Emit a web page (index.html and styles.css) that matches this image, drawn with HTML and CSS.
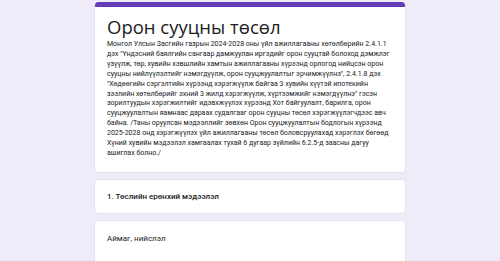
FILE: index.html
```html
<!DOCTYPE html>
<html lang="mn">
<head>
<meta charset="utf-8">
<link rel="stylesheet" href="styles.css">
</head>
<body>
<main class="form">
  <section class="card card-head">
    <div class="top-bar"></div>
    <div class="head-body">
      <h1 class="title">Орон сууцны төсөл</h1>
      <p class="desc">Монгол Улсын Засгийн газрын 2024-2028 оны үйл ажиллагааны хөтөлбөрийн 2.4.1.1 дэх "Үндэсний баялгийн сангаар дамжуулан иргэдийг орон сууцтай болоход дэмжлэг үзүүлж, төр, хувийн хэвшлийн хамтын ажиллагааны хүрээнд орлогод нийцсэн орон сууцны нийлүүлэлтийг нэмэгдүүлж, орон сууцжуулалтыг эрчимжүүлнэ", 2.4.1.8 дэх "Хөдөөгийн сэргэлтийн хүрээнд хэрэгжүүлж байгаа 3 хувийн хүүтэй ипотекийн зээлийн хөтөлбөрийг эхний 3 жилд хэрэгжүүлж, хүртээмжийг нэмэгдүүлнэ" гэсэн зорилтуудын хэрэгжилтийг идэвхжүүлэх хүрээнд Хот байгуулалт, барилга, орон сууцжуулалтын яамнаас дараах судалгааг орон сууцны төсөл хэрэгжүүлэгчдээс авч байна. /Таны оруулсан мэдээллийг зөвхөн Орон сууцжуулалтын бодлогын хүрээнд 2025-2028 онд хэрэгжүүлэх үйл ажиллагааны төсөл боловсруулахад хэрэглэх бөгөөд Хүний хувийн мэдээлэл хамгаалах тухай 6 дугаар зүйлийн 6.2.5-д заасны дагуу ашиглах болно./</p>
    </div>
  </section>
  <section class="card card-section">
    <h2 class="section-title">1. Төслийн ерөнхий мэдээлэл</h2>
  </section>
  <section class="card card-question">
    <div class="question">Аймаг, нийслэл</div>
  </section>
</main>
</body>
</html>
```

FILE: styles.css
```css
html, body {
  margin: 0;
  padding: 0;
}
body {
  background: #f0ebf8;
  font-family: Roboto, "Noto Sans", sans-serif;
  color: #202124;
  height: 261px;
  overflow: hidden;
}
.form {
  width: 312px;
  margin: 0 auto;
  padding-top: 2px;
  display: flex;
  flex-direction: column;
  gap: 6px;
}
.card {
  background: #fff;
  border: 1px solid #e6e1ee;
  border-radius: 4px;
  box-sizing: border-box;
}
.card-head {
  border-top: none;
  overflow: hidden;
}
.top-bar {
  height: 5px;
  background: #673ab7;
}
.head-body {
  padding: 9px 12px 13px 12px;
}
.title {
  margin: 0;
  font-family: "Open Sans", Roboto, sans-serif;
  font-weight: 400;
  font-size: 18.5px;
  line-height: 22px;
  color: #202124;
}
.desc {
  margin: 2px 0 0 0;
  font-size: 7px;
  line-height: 9.9px;
  color: #202124;
}
.card-section {
  height: 35px;
  padding: 0 12px;
  display: flex;
  align-items: center;
}
.section-title {
  margin: 0;
  font-size: 8px;
  font-weight: 500;
}
.card-question {
  height: 60px;
  padding: 13px 12px;
}
.question {
  font-size: 8px;
}
```
